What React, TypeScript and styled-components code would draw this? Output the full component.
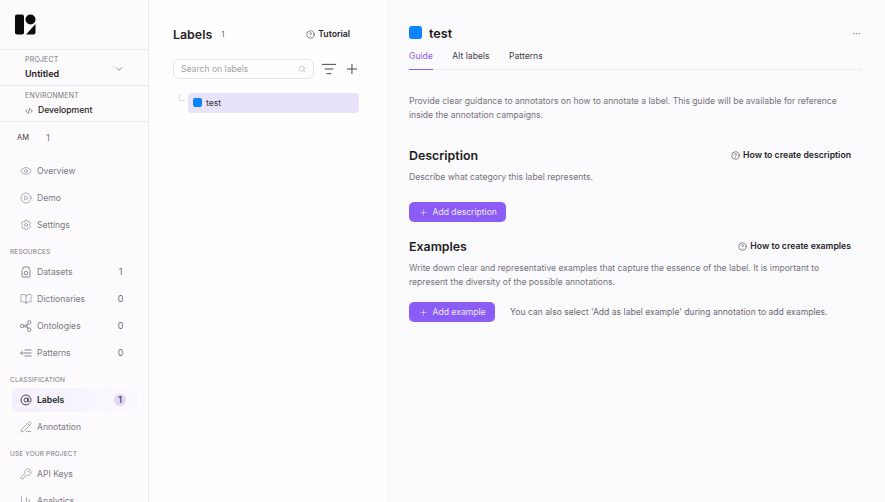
import React from "react";
import styled, { createGlobalStyle } from "styled-components";
import {
  AtSign,
  BarChart3,
  BookOpen,
  ChevronDown,
  CirclePlay,
  CircleHelp,
  CodeXml,
  Ellipsis,
  Eye,
  KeyRound,
  ListFilter,
  PencilLine,
  Plus,
  Search,
  Settings,
} from "lucide-react";

const Global = createGlobalStyle`
  html, body { margin: 0; padding: 0; height: 502px; overflow: hidden; }
  body { font-family: Inter, "Liberation Sans", sans-serif; background: #fbfafd; color: #17151c; }
  * { box-sizing: border-box; }
`;

const Page = styled.div`
  display: grid;
  grid-template-columns: 149px 237px 1fr;
  width: 885px;
  height: 502px;
  overflow: hidden;
`;

const Sidebar = styled.aside`
  background: #fdfbfd;
  border-right: 1px solid #e9e8ea;
  height: 502px;
  overflow: hidden;
`;

const LogoBar = styled.div`
  height: 50px;
  padding: 14px 0 0 15px;
  border-bottom: 1px solid #e9e8ea;
`;

const Switcher = styled.div`
  height: 36px;
  padding: 3px 24px 0 25px;
  border-bottom: 1px solid #e9e8ea;
  display: flex;
  align-items: center;
  justify-content: space-between;
`;

const EnvSwitcher = styled(Switcher)`
  padding-top: 5px;
`;

const SwitcherText = styled.div`
  display: flex;
  flex-direction: column;
  gap: 3px;
  margin-top: -4px;
`;

const Tiny = styled.div`
  font-size: 7px;
  line-height: 9px;
  letter-spacing: 0.2px;
  color: #77747c;
`;

const SwitcherValue = styled.div<{ $light?: boolean }>`
  margin-top: ${(p) => (p.$light ? "1px" : "0")};
  font-size: ${(p) => (p.$light ? "8.6px" : "9px")};
  line-height: 13px;
  font-weight: ${(p) => (p.$light ? 500 : 600)};
  color: #1c1a20;
  display: flex;
  align-items: center;
  gap: 5px;
`;

const UserRow = styled.div`
  height: 30px;
  padding: 0 0 0 17px;
  display: flex;
  align-items: center;
  font-size: 7.5px;
  font-weight: 400;
  color: #3a3840;
`;

const UserCount = styled.span`
  font-size: 9px;
  color: #77747c;
  margin-left: 17px;
`;

const Nav = styled.nav`
  padding-top: 5px;
  display: flex;
  flex-direction: column;
`;

const SectionLabel = styled.div`
  height: 20px;
  padding: 10px 0 0 10px;
  font-size: 6.5px;
  line-height: 9px;
  letter-spacing: 0.15px;
  color: #77747c;
  font-weight: 400;
`;

const NavRow = styled.div<{ $active?: boolean }>`
  height: ${(p) => (p.$active ? "24px" : "27px")};
  margin: ${(p) => (p.$active ? "1.5px 11px 1.5px 12px" : "0 11px 0 12px")};
  padding: 0 12px 0 8px;
  display: flex;
  align-items: center;
  gap: 5px;
  border-radius: 6px;
  background: ${(p) => (p.$active ? "linear-gradient(90deg, #f5f0fd, #fcf9fe)" : "transparent")};
  color: ${(p) => (p.$active ? "#201e25" : "#7c7886")};
  font-size: 8.6px;
  font-weight: ${(p) => (p.$active ? 600 : 400)};
  svg { flex: none; }
`;

const NavName = styled.span`
  flex: 1;
`;

const NavCount = styled.span`
  font-size: 9px;
  color: #6f6c76;
  width: 9px;
  text-align: center;
`;

const NavBadge = styled.span`
  width: 12px;
  height: 12px;
  margin-right: -1px;
  border-radius: 50%;
  background: #dfd6f8;
  color: #3e3a4b;
  font-size: 9px;
  font-weight: 500;
  display: flex;
  align-items: center;
  justify-content: center;
`;

const Middle = styled.section`
  background: #fffeff;
  padding: 0 26px 0 24px;
`;

const MidHeader = styled.div`
  height: 59px;
  padding-top: 9px;
  display: flex;
  align-items: center;
`;

const MidTitle = styled.h1`
  margin: 0;
  font-size: 12.4px;
  font-weight: 600;
  color: #25232a;
`;

const MidCount = styled.span`
  font-size: 8px;
  color: #67646d;
  margin-left: 9px;
`;

const HelpLink = styled.div`
  margin-left: auto;
  display: flex;
  align-items: center;
  gap: 3px;
  font-size: 8.7px;
  font-weight: 600;
  color: #27252b;
  white-space: nowrap;
`;

const TutorialLink = styled(HelpLink)`
  margin-right: 10px;
`;

const SearchRow = styled.div`
  display: flex;
  align-items: center;
  height: 20px;
  gap: 7px;
`;

const SearchBox = styled.div`
  width: 142px;
  height: 20px;
  border: 1px solid #e5e3e8;
  border-radius: 6px;
  padding: 0 7px;
  display: flex;
  align-items: center;
  justify-content: space-between;
  font-size: 8.6px;
  color: #a3a0a8;
`;

const TreeRow = styled.div`
  margin-top: 14px;
  display: flex;
  align-items: flex-start;
`;

const TreeLine = styled.div`
  width: 6px;
  height: 7px;
  margin: 1px 3px 0 6px;
  border-left: 1px solid #dcdadf;
  border-bottom: 1px solid #dcdadf;
`;

const TreeItem = styled.div`
  width: 171px;
  height: 20px;
  border-radius: 3px;
  background: #e8e2fa;
  display: flex;
  align-items: center;
  padding: 0 0 0 5px;
  gap: 4px;
  font-size: 8.6px;
  color: #36343b;
`;

const TreeSwatch = styled.span`
  display: block;
  width: 9px;
  height: 9px;
  margin-top: -2px;
  border-radius: 2px;
  background: #0a84ff;
  flex: none;
`;

const TitleSwatch = styled.span`
  display: block;
  width: 13px;
  height: 13px;
  margin-top: -2px;
  border-radius: 3px;
  background: #0a84ff;
  flex: none;
`;

const Main = styled.main`
  background: #fbfafd;
  padding: 0 23px;
`;

const MainHeader = styled.div`
  height: 42px;
  padding-top: 24px;
  display: flex;
  align-items: center;
  gap: 7px;
`;

const MainTitle = styled.h2`
  margin: 0;
  font-size: 12.6px;
  font-weight: 600;
  color: #19171d;
`;

const More = styled.div`
  margin: 0 1px 0 auto;
  display: flex;
  color: #77747c;
`;

const Tabs = styled.div`
  display: flex;
  gap: 19.5px;
  height: 25px;
  margin-top: 3px;
  border-bottom: 1px solid #eeedf0;
`;

const Tab = styled.div<{ $active?: boolean }>`
  height: 25px;
  padding-top: 5px;
  font-size: 8.6px;
  line-height: 12px;
  color: ${(p) => (p.$active ? "#8b5cf6" : "#3f3d45")};
  border-bottom: ${(p) => (p.$active ? "1px solid #8b5cf6" : "none")};
`;

const Intro = styled.p`
  margin: 25px 0 0;
  font-size: 8.6px;
  line-height: 13.5px;
  color: #75727b;
  width: 445px;
`;

const SectionHead = styled.div`
  display: flex;
  align-items: center;
  justify-content: space-between;
  padding-right: 11px;
  height: 20px;
`;

const DescHead = styled(SectionHead)`
  margin-top: 23px;
`;

const ExHead = styled(SectionHead)`
  margin-top: 14px;
`;

const SectionTitle = styled.h3`
  margin: 0;
  font-size: 12.4px;
  font-weight: 600;
  color: #1e1c22;
`;

const SectionHelp = styled(HelpLink)`
  margin-left: 0;
`;

const Body = styled.p`
  margin: 6px 0 0;
  font-size: 8.6px;
  line-height: 13.5px;
  color: #75727b;
  width: 445px;
`;

const DescButtonWrap = styled.div`
  margin-top: 16px;
`;

const ExButtonRow = styled.div`
  margin-top: 13px;
  display: flex;
  align-items: center;
  gap: 15px;
`;

const PrimaryButton = styled.button`
  height: 20px;
  border: 0;
  border-radius: 5px;
  background: #8b5cf6;
  color: #efe8fe;
  padding: 0 9.5px;
  display: inline-flex;
  align-items: center;
  gap: 5px;
  font: 400 8.6px Inter, "Liberation Sans", sans-serif;
`;

const Hint = styled.span`
  font-size: 8.6px;
  color: #6c6972;
`;

function Logo() {
  return (
    <svg width="21" height="21" viewBox="0 0 21 21" fill="#0b0b0d">
      <rect x="0" y="0.5" width="9" height="20" rx="2" />
      <circle cx="15.5" cy="5.5" r="5" />
      <path d="M20.5 10 V18.5 a2 2 0 0 1 -2 2 H11 Z" />
    </svg>
  );
}

function DatasetIcon() {
  return (
    <svg width="12" height="12" viewBox="0 0 12 12" fill="none" stroke="currentColor" strokeWidth="0.9">
      <path d="M3.5 1h5M3 1v2.2L2 4.4V10a1 1 0 0 0 1 1h6a1 1 0 0 0 1-1V4.4L9 3.2V1" />
      <circle cx="6" cy="7" r="1.8" />
    </svg>
  );
}

function OntologyIcon() {
  return (
    <svg width="12" height="12" viewBox="0 0 12 12" fill="none" stroke="currentColor" strokeWidth="0.9">
      <circle cx="2.2" cy="6" r="1.7" />
      <circle cx="9.2" cy="2.4" r="1.7" />
      <circle cx="9.2" cy="9.6" r="1.7" />
      <circle cx="6" cy="6" r="1.2" />
      <path d="M3.9 6h.9M7 5.2l1-1.6M7 6.8l1 1.6" />
    </svg>
  );
}

function PatternIcon() {
  return (
    <svg width="12" height="12" viewBox="0 0 12 12" fill="none" stroke="currentColor" strokeWidth="0.9">
      <path d="M4.5 3h7M4.5 9h7M.5 6h11M2.5 4.2.5 6l2 1.8" />
    </svg>
  );
}

type Item = { name: string; icon: React.ReactNode; count?: string };
const ic = { size: 12, strokeWidth: 1.2 };

const top: Item[] = [
  { name: "Overview", icon: <Eye {...ic} /> },
  { name: "Demo", icon: <CirclePlay {...ic} /> },
  { name: "Settings", icon: <Settings {...ic} /> },
];
const resources: Item[] = [
  { name: "Datasets", icon: <DatasetIcon />, count: "1" },
  { name: "Dictionaries", icon: <BookOpen {...ic} />, count: "0" },
  { name: "Ontologies", icon: <OntologyIcon />, count: "0" },
  { name: "Patterns", icon: <PatternIcon />, count: "0" },
];

function Row({ item }: { item: Item }) {
  return (
    <NavRow>
      {item.icon}
      <NavName>{item.name}</NavName>
      {item.count && <NavCount>{item.count}</NavCount>}
    </NavRow>
  );
}

export default function App() {
  return (
    <Page>
      <Global />
      <Sidebar>
        <LogoBar>
          <Logo />
        </LogoBar>
        <Switcher>
          <SwitcherText>
            <Tiny>PROJECT</Tiny>
            <SwitcherValue>Untitled</SwitcherValue>
          </SwitcherText>
          <ChevronDown size={10} strokeWidth={1.4} color="#44424a" />
        </Switcher>
        <EnvSwitcher>
          <SwitcherText>
            <Tiny>ENVIRONMENT</Tiny>
            <SwitcherValue $light>
              <CodeXml size={8} strokeWidth={1.6} />
              Development
            </SwitcherValue>
          </SwitcherText>
        </EnvSwitcher>
        <UserRow>
          AM<UserCount>1</UserCount>
        </UserRow>
        <Nav>
          {top.map((i) => (
            <Row key={i.name} item={i} />
          ))}
          <SectionLabel>RESOURCES</SectionLabel>
          {resources.map((i) => (
            <Row key={i.name} item={i} />
          ))}
          <SectionLabel>CLASSIFICATION</SectionLabel>
          <NavRow $active>
            <AtSign size={12} strokeWidth={1.6} />
            <NavName>Labels</NavName>
            <NavBadge>1</NavBadge>
          </NavRow>
          <Row item={{ name: "Annotation", icon: <PencilLine {...ic} /> }} />
          <SectionLabel>USE YOUR PROJECT</SectionLabel>
          <Row item={{ name: "API Keys", icon: <KeyRound {...ic} /> }} />
          <Row item={{ name: "Analytics", icon: <BarChart3 {...ic} /> }} />
        </Nav>
      </Sidebar>
      <Middle>
        <MidHeader>
          <MidTitle>Labels</MidTitle>
          <MidCount>1</MidCount>
          <TutorialLink>
            <CircleHelp size={9} strokeWidth={1.4} />
            Tutorial
          </TutorialLink>
        </MidHeader>
        <SearchRow>
          <SearchBox>
            Search on labels
            <Search size={8} strokeWidth={1.5} color="#a3a0a8" />
          </SearchBox>
          <ListFilter size={16} strokeWidth={1.4} color="#3b393f" />
          <Plus size={16} strokeWidth={1.4} color="#3b393f" />
        </SearchRow>
        <TreeRow>
          <TreeLine />
          <TreeItem>
            <TreeSwatch />
            test
          </TreeItem>
        </TreeRow>
      </Middle>
      <Main>
        <MainHeader>
          <TitleSwatch />
          <MainTitle>test</MainTitle>
          <More>
            <Ellipsis size={9} strokeWidth={1.4} />
          </More>
        </MainHeader>
        <Tabs>
          <Tab $active>Guide</Tab>
          <Tab>Alt labels</Tab>
          <Tab>Patterns</Tab>
        </Tabs>
        <Intro>
          Provide clear guidance to annotators on how to annotate a label. This guide will be available for
          reference inside the annotation campaigns.
        </Intro>
        <DescHead>
          <SectionTitle>Description</SectionTitle>
          <SectionHelp>
            <CircleHelp size={9} strokeWidth={1.4} />
            How to create description
          </SectionHelp>
        </DescHead>
        <Body>Describe what category this label represents.</Body>
        <DescButtonWrap>
          <PrimaryButton>
            <Plus size={9} strokeWidth={1.5} />
            Add description
          </PrimaryButton>
        </DescButtonWrap>
        <ExHead>
          <SectionTitle>Examples</SectionTitle>
          <SectionHelp>
            <CircleHelp size={9} strokeWidth={1.4} />
            How to create examples
          </SectionHelp>
        </ExHead>
        <Body>
          Write down clear and representative examples that capture the essence of the label. It is important to
          represent the diversity of the possible annotations.
        </Body>
        <ExButtonRow>
          <PrimaryButton>
            <Plus size={9} strokeWidth={1.5} />
            Add example
          </PrimaryButton>
          <Hint>You can also select 'Add as label example' during annotation to add examples.</Hint>
        </ExButtonRow>
      </Main>
    </Page>
  );
}
